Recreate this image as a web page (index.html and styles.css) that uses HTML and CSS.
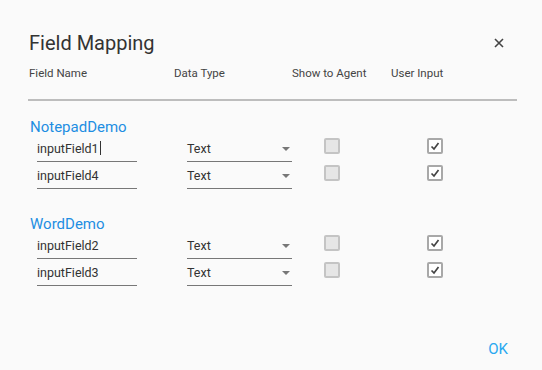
FILE: index.html
```html
<!DOCTYPE html>
<html lang="en">

<head>
  <meta charset="UTF-8">
  <title>Field Mapping</title>
  <link rel="stylesheet" href="styles.css">
</head>

<body>
  <div class="dialog">
    <div class="dialog-head">
      <h2>Field Mapping</h2>
      <span class="close">
        <svg width="10" height="10" viewBox="0 0 10 10"><path d="M1 1L9 9M9 1L1 9" stroke="#444" stroke-width="1.6" /></svg>
      </span>
    </div>

    <div class="columns">
      <span class="col-name">Field Name</span>
      <span class="col-type">Data Type</span>
      <span class="col-show">Show to Agent</span>
      <span class="col-input">User Input</span>
    </div>
    <div class="divider"></div>

    <div class="group">
      <div class="group-title">NotepadDemo</div>
      <div class="row">
        <div class="field">inputField1<span class="caret"></span></div>
        <div class="select">Text<span class="arrow"></span></div>
        <span class="box box-off"></span>
        <span class="box box-on"><svg width="12" height="12" viewBox="0 0 12 12"><path d="M2.5 6.5L5 9L9.5 3" fill="none" stroke="#444" stroke-width="1.7" /></svg></span>
      </div>
      <div class="row">
        <div class="field">inputField4</div>
        <div class="select">Text<span class="arrow"></span></div>
        <span class="box box-off"></span>
        <span class="box box-on"><svg width="12" height="12" viewBox="0 0 12 12"><path d="M2.5 6.5L5 9L9.5 3" fill="none" stroke="#444" stroke-width="1.7" /></svg></span>
      </div>
    </div>

    <div class="group group-2">
      <div class="group-title">WordDemo</div>
      <div class="row">
        <div class="field">inputField2</div>
        <div class="select">Text<span class="arrow"></span></div>
        <span class="box box-off"></span>
        <span class="box box-on"><svg width="12" height="12" viewBox="0 0 12 12"><path d="M2.5 6.5L5 9L9.5 3" fill="none" stroke="#444" stroke-width="1.7" /></svg></span>
      </div>
      <div class="row">
        <div class="field">inputField3</div>
        <div class="select">Text<span class="arrow"></span></div>
        <span class="box box-off"></span>
        <span class="box box-on"><svg width="12" height="12" viewBox="0 0 12 12"><path d="M2.5 6.5L5 9L9.5 3" fill="none" stroke="#444" stroke-width="1.7" /></svg></span>
      </div>
    </div>

    <div class="actions">
      <span class="ok">OK</span>
    </div>
  </div>
</body>

</html>
```

FILE: styles.css
```css
body {
  margin: 0;
  background: #fafafa;
  font-family: Roboto, "Liberation Sans", sans-serif;
  color: #333;
}

.dialog {
  width: 542px;
  height: 370px;
  padding: 29px 25px 0 29px;
  box-sizing: border-box;
}

.dialog-head {
  display: flex;
  justify-content: space-between;
  align-items: center;
  height: 28px;
}

.dialog-head h2 {
  margin: 0;
  font-size: 20px;
  font-weight: 400;
  color: #333;
}

.close {
  display: flex;
  margin-right: 13px;
}

.columns {
  display: flex;
  margin-top: 8px;
  height: 16px;
  line-height: 16px;
  font-size: 11.5px;
  color: #444;
}

.col-name { width: 145px; }
.col-type { width: 118px; }
.col-show { width: 99px; }

.divider {
  margin-top: 18px;
  width: 489px;
  height: 2px;
  margin-left: -1px;
  background: #bdbdbd;
}

.group {
  margin-top: 16px;
}

.group-2 {
  margin-top: 23px;
}

.group-title {
  height: 20px;
  line-height: 20px;
  font-size: 15px;
  color: #1e8ee2;
  padding-left: 1px;
}

.row {
  display: flex;
  height: 27px;
  padding-left: 8px;
}

.field,
.select {
  height: 24px;
  line-height: 24px;
  font-size: 12.5px;
  border-bottom: 1px solid #777;
  color: #333;
}

.field {
  width: 100px;
  margin-right: 50px;
}

.caret {
  display: inline-block;
  width: 1px;
  height: 14px;
  background: #333;
  vertical-align: -2px;
  margin-left: 1px;
}

.select {
  position: relative;
  width: 105px;
  margin-right: 32px;
}

.arrow {
  position: absolute;
  right: 2px;
  top: 10px;
  border-left: 4px solid transparent;
  border-right: 4px solid transparent;
  border-top: 4px solid #777;
}

.box {
  box-sizing: border-box;
  display: flex;
  width: 16px;
  height: 16px;
  margin-top: 1px;
  border: 2px solid #c4c4c4;
  border-radius: 2px;
}

.box-off {
  background: #e6e6e6;
  margin-right: 87px;
}

.box-on {
  background: #fff;
  border-color: #a8a8a8;
}

.actions {
  display: flex;
  justify-content: flex-end;
  margin-top: 52px;
  padding-right: 9px;
}

.ok {
  font-size: 15px;
  color: #29a8f0;
}
```
